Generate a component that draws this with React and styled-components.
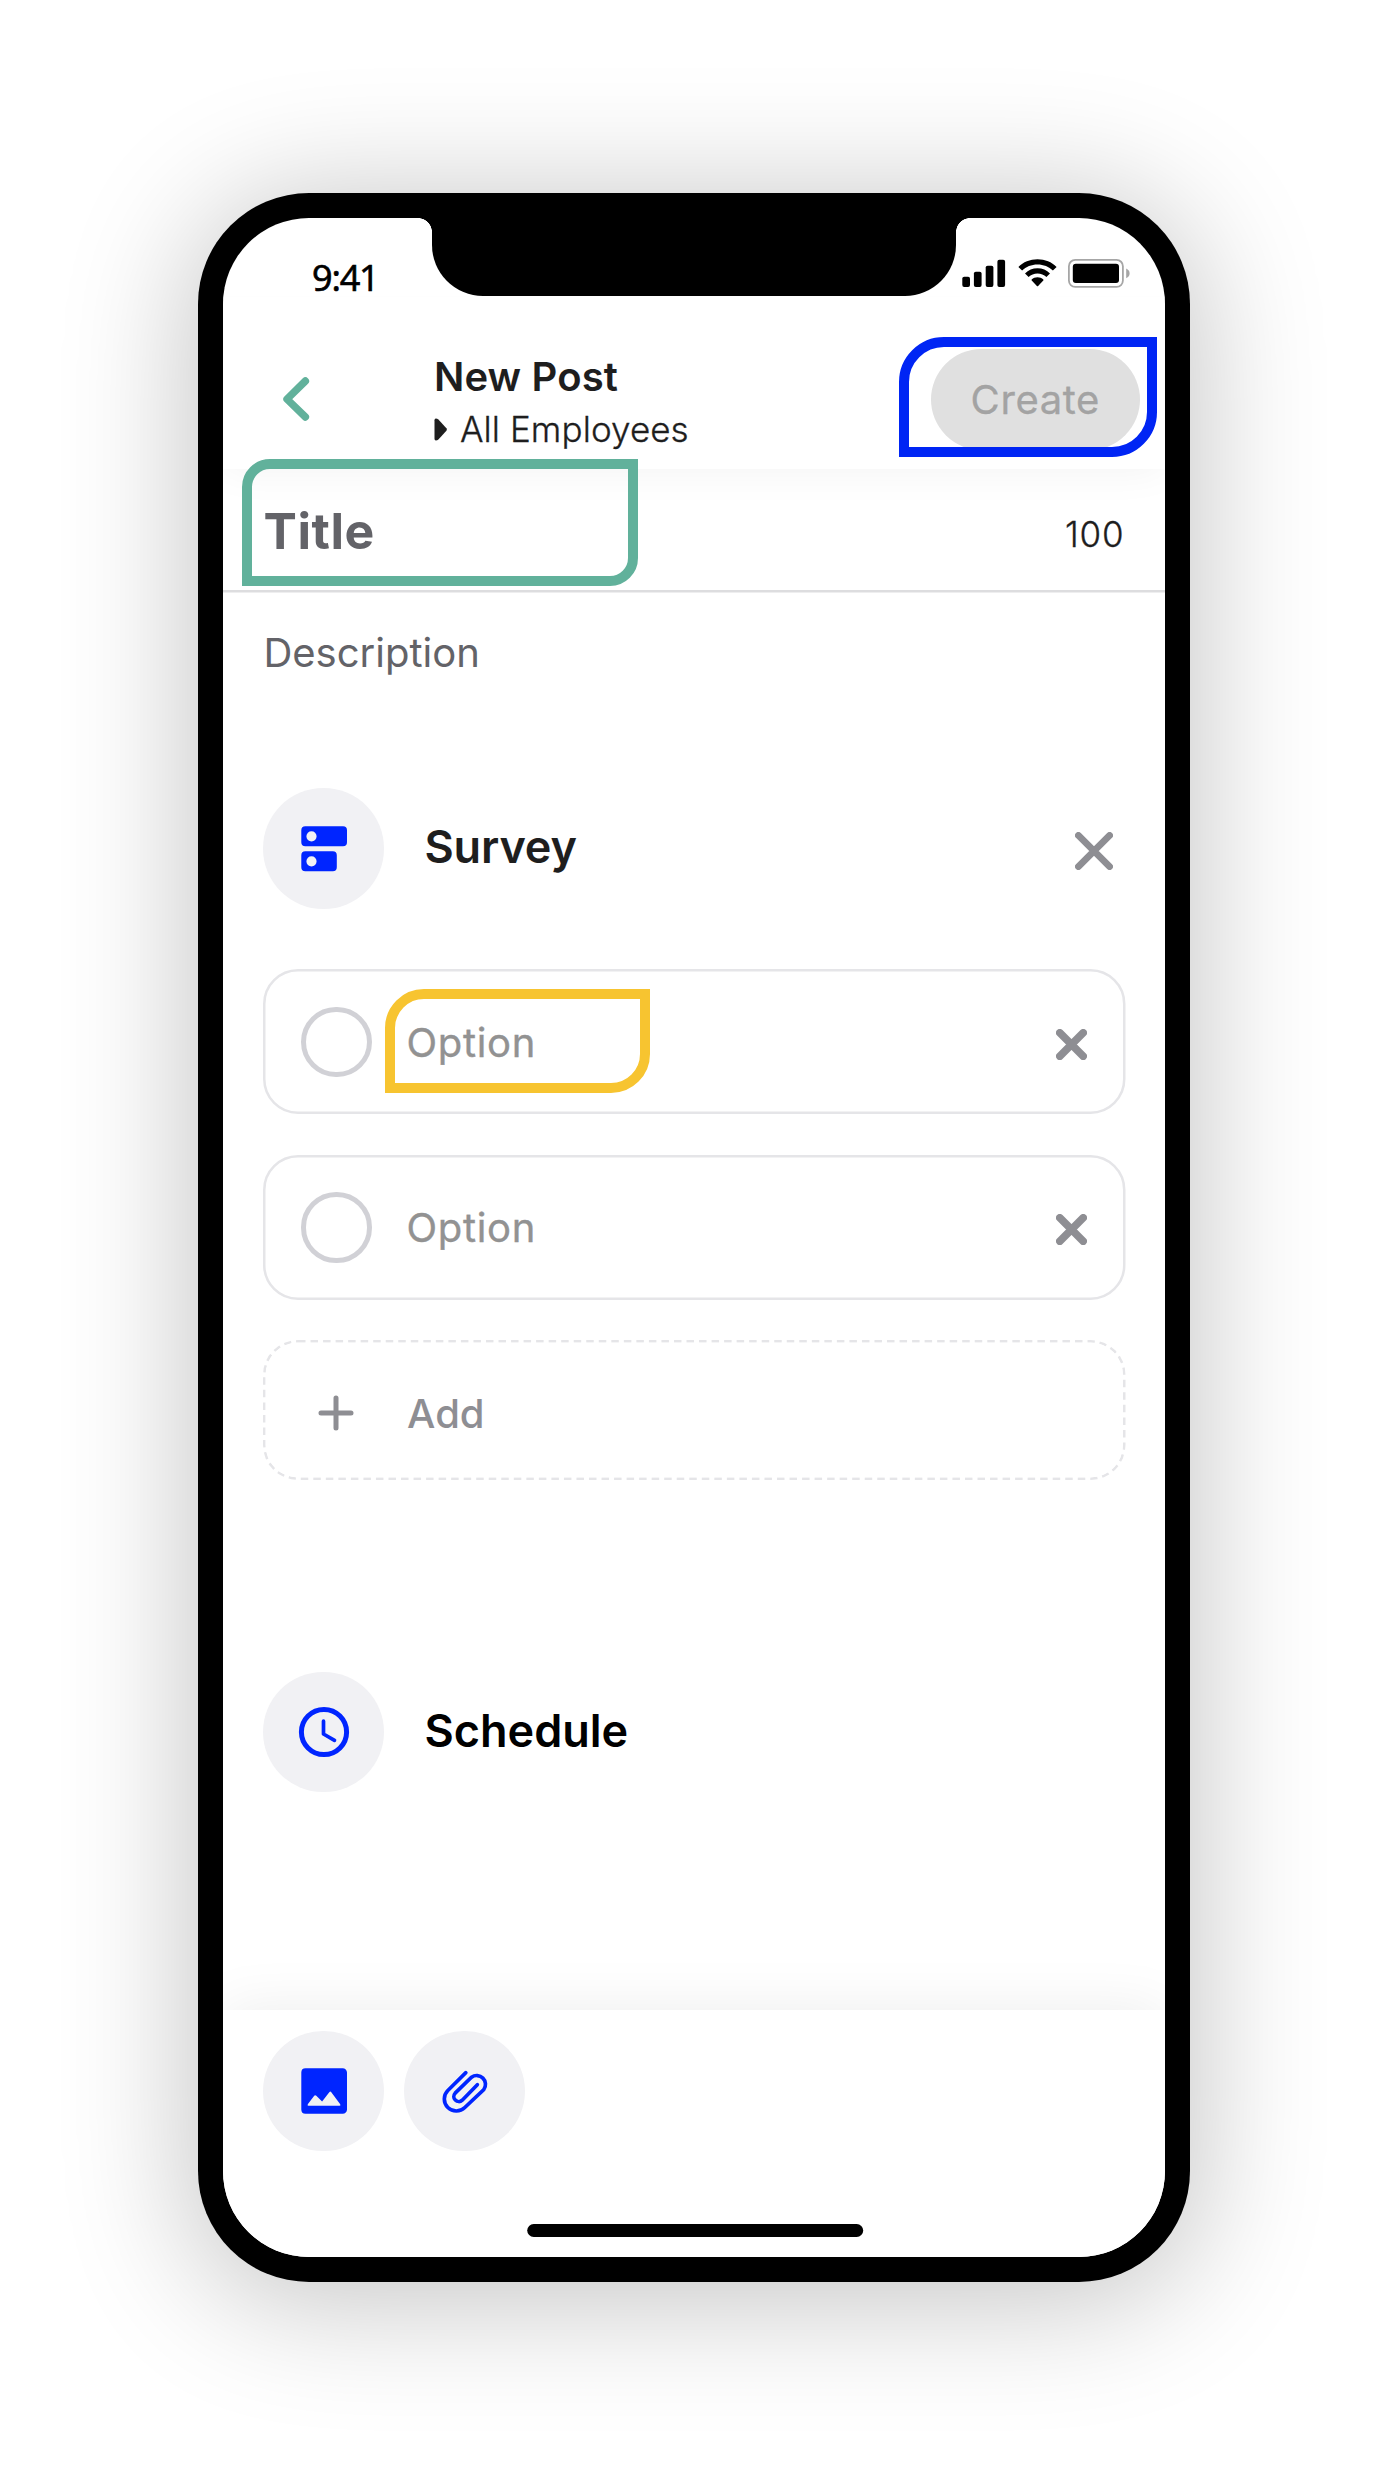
import React from "react";
import styled, { createGlobalStyle, css } from "styled-components";

const GlobalStyle = createGlobalStyle`
  *, *::before, *::after { box-sizing: border-box; }
  html, body { margin: 0; padding: 0; background: #fff; }
  button { font: inherit; border: 0; padding: 0; margin: 0; background: none; }
  svg { display: block; flex: none; }
`;

const Page = styled.main`
  height: 2475px;
  overflow: hidden;
  display: flex;
  justify-content: center;
  align-items: flex-start;
  padding-top: 193.3px;
  font-family: Inter, "Liberation Sans", sans-serif;
  color: #1e1e1e;
`;

const Device = styled.div`
  width: 991.4px;
  height: 2088.4px;
  padding: 25.1px;
  border-radius: 111px;
  background: #000;
  box-shadow: 0 12px 128px 9px rgba(0, 0, 0, 0.23);
`;

const Screen = styled.div`
  position: relative;
  height: 100%;
  display: flex;
  flex-direction: column;
  overflow: hidden;
  border-radius: 86px;
  background: #fff;
`;

const StatusBar = styled.div`
  position: relative;
  z-index: 3;
  height: 78px;
  display: grid;
  grid-template-columns: 208.2px 524.6px 1fr;
  grid-template-rows: 78px;
`;

const Clock = styled.time`
  padding: 35px 0 0 88.7px;
  font: 500 36px/49px "Open Sans", "Noto Sans", sans-serif;
  letter-spacing: -1.2px;
  color: #000;
  -webkit-text-stroke: 0.7px #000;
`;

const Notch = styled.div`
  position: relative;
  background: #000;
  border-radius: 0 0 51px 51px;

  &::before, &::after {
    content: "";
    position: absolute;
    top: 0;
    width: 14px;
    height: 14px;
  }
  &::before {
    right: 100%;
    background: radial-gradient(circle at 0 100%, transparent 13.6px, #000 14.2px);
  }
  &::after {
    left: 100%;
    background: radial-gradient(circle at 100% 100%, transparent 13.6px, #000 14.2px);
  }
`;

const StatusIcons = styled.div`
  display: flex;
  align-items: flex-start;
  gap: 11.9px;
  padding: 40.7px 0 0 5.5px;
`;

const Header = styled.header`
  position: relative;
  z-index: 2;
  height: 173px;
  padding: 32.4px 24.8px 0 57px;
  display: flex;
  align-items: center;
  background: #fff;
  box-shadow: 0 0 40px rgba(0, 0, 0, 0.055);
  clip-path: inset(0 0 -60px 0);
`;

const Heading = styled.div`
  flex: 1;
  padding: 8px 0 0 114px;
`;

const Title = styled.h1`
  margin: 0;
  font-size: 40px;
  font-weight: 600;
  line-height: 52px;
  letter-spacing: 0.15px;
  padding-left: 7.5px;
`;

const Audience = styled.div`
  display: flex;
  align-items: center;
  gap: 12.2px;
  padding-left: 7.3px;
  font-size: 35px;
  font-weight: 300;
  line-height: 52px;
  letter-spacing: 0.08px;
  -webkit-text-stroke: 0.3px currentColor;
`;

const CreateButton = styled.button`
  width: 209px;
  height: 101px;
  padding-top: 1px;
  border-radius: 50.5px;
  background: #e0e0e0;
  color: #a3a3a3;
  font-size: 40px;
  font-weight: 400;
  line-height: 48px;
  letter-spacing: 0.6px;
  -webkit-text-stroke: 0.3px currentColor;
`;

const hairline = css`
  content: "";
  position: absolute;
  top: 0;
  left: 0;
  width: 40%;
  height: 40%;
  transform: scale(2.5);
  transform-origin: 0 0;
  pointer-events: none;
`;

const TitleRow = styled.div`
  position: relative;
  height: 123.2px;
  display: flex;
  align-items: center;
  justify-content: space-between;
  padding: 3px 40px 2.5px 40.2px;

  &::after {
    ${hairline}
    top: 1px;
    width: 40.3%;
    border-bottom: 1px solid #dddddf;
  }
`;

const TitleField = styled.div`
  font-size: 50px;
  font-weight: 700;
  line-height: 60px;
  letter-spacing: 0.5px;
  color: #636368;
`;

const Remaining = styled.div`
  padding-top: 6px;
  font-size: 35px;
  font-weight: 300;
  line-height: 42px;
  letter-spacing: 0.9px;
  -webkit-text-stroke: 0.3px currentColor;
`;

const Description = styled.p`
  margin: 0;
  padding: 36.3px 40px 0;
  font-size: 40px;
  font-weight: 400;
  line-height: 48px;
  color: #636368;
`;

const Body = styled.section`
  flex: 1;
  padding: 111.4px 39.6px 0 40.1px;
`;

const SectionRow = styled.div`
  display: flex;
  align-items: center;
  height: 120.5px;
  gap: 40.5px;
  margin-top: ${(p) => p.$offset || 0}px;
  padding-right: ${(p) => p.$inset || 0}px;
`;

const IconCircle = styled.div`
  flex: none;
  width: 120.5px;
  height: 120.5px;
  border-radius: 50%;
  display: flex;
  align-items: center;
  justify-content: center;
  background: #f1f1f4;
`;

const SectionTitle = styled.h2`
  flex: 1;
  margin: 0;
  padding-bottom: 2.4px;
  font-size: 45px;
  font-weight: 600;
  line-height: 54px;
  letter-spacing: ${(p) => p.$tracking || 0}px;
  color: ${(p) => p.$color || "#1e1e1e"};
`;

const OptionList = styled.div`
  display: grid;
  gap: 40.2px;
  margin-top: 60.4px;
`;

const OptionRow = styled.div`
  position: relative;
  height: ${(p) => (p.$dashed ? 140.7 : 145.4)}px;
  display: flex;
  align-items: center;
  padding: ${(p) => (p.$dashed ? 5 : 0)}px 38px 0 37.5px;

  &::after {
    ${hairline}
    border: 1px ${(p) => (p.$dashed ? "dashed" : "solid")} #e5e5e8;
    border-radius: 14px;
  }
`;

const Radio = styled.span`
  width: 70.6px;
  height: 70.6px;
  border: 5px solid #d1d1d6;
  border-radius: 50%;
`;

const PlusSlot = styled.span`
  width: 70.6px;
  display: flex;
  justify-content: center;
`;

const OptionLabel = styled.span`
  flex: 1;
  padding: ${(p) => (p.$muted ? "1px 0 0 35.5px" : "2px 0 0 34.9px")};
  font-size: 40px;
  font-weight: ${(p) => (p.$muted ? 500 : 400)};
  line-height: 48px;
  letter-spacing: ${(p) => (p.$muted ? 0 : 0.7)}px;
  color: ${(p) => (p.$muted ? "#8e8e93" : "#929292")};
  -webkit-text-stroke: ${(p) => (p.$muted ? 0 : 0.35)}px currentColor;
`;

const Footer = styled.footer`
  position: relative;
  height: 246.2px;
  padding: 20.2px 40.1px 0;
  background: #fff;
  box-shadow: 0 0 56px rgba(0, 0, 0, 0.075);
`;

const Attachments = styled.div`
  display: flex;
  gap: 20.2px;
`;

const HomeIndicator = styled.div`
  width: 336.6px;
  height: 12.6px;
  margin: 73px auto 0;
  border-radius: 7px;
  background: #000;
  transform: translateX(1.2px);
`;

const Callout = styled.div`
  position: absolute;
  z-index: 4;
  left: ${(p) => p.$x}px;
  top: ${(p) => p.$y}px;
  width: ${(p) => p.$w}px;
  height: ${(p) => p.$h}px;
  border: 10px solid ${(p) => p.$color};
  border-radius: ${(p) => p.$r}px 0;
  pointer-events: none;
`;

const SignalIcon = () => (
  <svg width="44" height="29" viewBox="0 0 44 29">
    <rect x="0.3" y="17.7" width="7.7" height="10.3" rx="1.9" />
    <rect x="11.9" y="12.7" width="7.7" height="15.3" rx="1.9" />
    <rect x="23.7" y="6.7" width="7.7" height="21.3" rx="1.9" />
    <rect x="35.4" y="0.8" width="7.7" height="27.2" rx="1.9" />
  </svg>
);

const WifiIcon = () => (
  <svg width="39" height="28" viewBox="0 0 39 28">
    <path d="M19.5 0.2C27 0.2 33.8 3 38.6 7.9L34.9 11.6C30.9 7.8 25.6 5.5 19.5 5.5S8.1 7.8 4.1 11.6L0.4 7.9C5.2 3 12 0.2 19.5 0.2Z" />
    <path d="M19.5 9.3C24.3 9.3 28.7 11.2 32 14.4L28.4 17.9C26 15.7 22.9 14.4 19.5 14.4S13 15.7 10.6 17.9L7 14.4C10.3 11.2 14.7 9.3 19.5 9.3Z" />
    <path d="M19.5 18.3C21.7 18.3 23.8 19.1 25.3 20.6Q25.8 21.1 25.3 21.6L20.1 27Q19.5 27.6 18.9 27L13.7 21.6Q13.2 21.1 13.7 20.6C15.2 19.1 17.3 18.3 19.5 18.3Z" />
  </svg>
);

const BatteryIcon = () => (
  <svg width="62" height="29" viewBox="0 0 62 29">
    <rect x="0.9" y="0.9" width="54" height="27" rx="6.3" fill="none" stroke="#a6a6a6" strokeWidth="1.8" />
    <rect x="4.8" y="4.8" width="46.2" height="19.2" rx="3" />
    <path d="M58.2 9.6Q61.6 11.3 61.6 14.4T58.2 19.2Z" fill="#a6a6a6" />
  </svg>
);

const BackIcon = () => (
  <svg width="32" height="50" viewBox="0 0 32 50">
    <path d="M25.4 7L7 25.2L25.4 43" fill="none" stroke="#61b19b" strokeWidth="7.4" strokeLinecap="round" strokeLinejoin="round" />
  </svg>
);

const CaretIcon = () => (
  <svg width="14" height="23" viewBox="0 0 14 23">
    <path d="M0.5 2.2Q0.5 0.6 1.8 0.6Q3.3 0.6 4.4 1.6L12.4 10.3Q13.4 11.5 12.4 12.7L4.4 21.4Q3.3 22.4 1.8 22.4Q0.5 22.4 0.5 20.8Z" fill="#1e1e1e" />
  </svg>
);

const SurveyIcon = () => (
  <svg width="46" height="46" viewBox="0 0 46 46" fill="#0025ff">
    <path fillRule="evenodd" d="M4.3 0.3H42A4 4 0 0 1 46 4.3V16.3A4 4 0 0 1 42 20.3H4.3A4 4 0 0 1 0.3 16.3V4.3A4 4 0 0 1 4.3 0.3ZM10.5 5.2A5.1 5.1 0 1 0 10.5 15.4A5.1 5.1 0 1 0 10.5 5.2Z" />
    <path fillRule="evenodd" d="M4.3 25.3H31.8A4 4 0 0 1 35.8 29.3V41.3A4 4 0 0 1 31.8 45.3H4.3A4 4 0 0 1 0.3 41.3V29.3A4 4 0 0 1 4.3 25.3ZM10.5 30.2A5.1 5.1 0 1 0 10.5 40.4A5.1 5.1 0 1 0 10.5 30.2Z" />
  </svg>
);

const ScheduleIcon = () => (
  <svg width="52" height="52" viewBox="0 0 52 52" fill="none" stroke="#0025ff">
    <circle cx="26" cy="26" r="22.6" strokeWidth="5" />
    <path d="M25.5 15.2V28L36.5 34.4" strokeWidth="3.7" strokeLinecap="round" strokeLinejoin="round" />
  </svg>
);

const ImageIcon = () => (
  <svg width="46" height="46" viewBox="0 0 46 46">
    <path
      fill="#0025ff"
      fillRule="evenodd"
      d="M4.5 0.3H41.7A4.3 4.3 0 0 1 46 4.6V41.4A4.3 4.3 0 0 1 41.7 45.7H4.5A4.3 4.3 0 0 1 0.3 41.4V4.6A4.3 4.3 0 0 1 4.5 0.3ZM6.8 36.3Q6 37.8 7.6 37.8H38.4Q40 37.8 39.2 36.3L30.3 24.2Q29.3 23 28.3 24.2L21.1 33.6L15.3 27.8Q14.2 26.7 13.2 27.8Z"
    />
  </svg>
);

const ClipIcon = () => (
  <svg width="48" height="48" viewBox="-2.5 0 144 144">
    <path
      d="M75 17L21 70.5A36 36 0 0 0 72 121.5L129 67.4A26.4 26.4 0 0 0 92.1 30.6L43 78.4A15 15 0 0 0 64.2 99.6L109.5 53"
      fill="none"
      stroke="#0025ff"
      strokeWidth="11"
      strokeLinecap="round"
    />
  </svg>
);

const CloseIcon = ({ size, weight }) => (
  <svg width={size} height={size} viewBox={`0 0 ${size} ${size}`}>
    <path
      d={`M${weight / 2} ${weight / 2}L${size - weight / 2} ${size - weight / 2}M${size - weight / 2} ${weight / 2}L${weight / 2} ${size - weight / 2}`}
      stroke="#8e8e93"
      strokeWidth={weight}
      strokeLinecap="round"
    />
  </svg>
);

const PlusIcon = () => (
  <svg width="36" height="36" viewBox="0 0 36 36">
    <path d="M18 3V33M3 18H33" stroke="#8e8e93" strokeWidth="5" strokeLinecap="round" />
  </svg>
);

const CloseSlot = styled.span`
  padding-top: ${(p) => p.$drop}px;
`;

export default function App() {
  return (
    <>
      <GlobalStyle />
      <Page>
        <Device>
          <Screen>
            <StatusBar>
              <Clock>9:41</Clock>
              <Notch />
              <StatusIcons>
                <SignalIcon />
                <WifiIcon />
                <BatteryIcon />
              </StatusIcons>
            </StatusBar>

            <Header>
              <BackIcon />
              <Heading>
                <Title>New Post</Title>
                <Audience>
                  <CaretIcon />
                  All Employees
                </Audience>
              </Heading>
              <CreateButton>Create</CreateButton>
            </Header>

            <TitleRow>
              <TitleField>Title</TitleField>
              <Remaining>100</Remaining>
            </TitleRow>
            <Description>Description</Description>

            <Body>
              <SectionRow $inset={12}>
                <IconCircle><SurveyIcon /></IconCircle>
                <SectionTitle $tracking={-0.15}>Survey</SectionTitle>
                <CloseSlot $drop={5}><CloseIcon size={38} weight={6.8} /></CloseSlot>
              </SectionRow>

              <OptionList>
                {[0, 1].map((i) => (
                  <OptionRow key={i}>
                    <Radio />
                    <OptionLabel>Option</OptionLabel>
                    <CloseSlot $drop={4.6}><CloseIcon size={31} weight={7.6} /></CloseSlot>
                  </OptionRow>
                ))}
                <OptionRow $dashed>
                  <PlusSlot><PlusIcon /></PlusSlot>
                  <OptionLabel $muted>Add</OptionLabel>
                </OptionRow>
              </OptionList>

              <SectionRow $offset={190.5}>
                <IconCircle><ScheduleIcon /></IconCircle>
                <SectionTitle $color="#000">Schedule</SectionTitle>
              </SectionRow>
            </Body>

            <Footer>
              <Attachments>
                <IconCircle><ImageIcon /></IconCircle>
                <IconCircle><ClipIcon /></IconCircle>
              </Attachments>
              <HomeIndicator />
            </Footer>

            <Callout $x={18.6} $y={240.6} $w={396} $h={127} $r={28} $color="#61b19b" />
            <Callout $x={675.6} $y={118.6} $w={258} $h={120} $r={45} $color="#0025f4" />
            <Callout $x={161.6} $y={770.6} $w={265} $h={104} $r={39} $color="#f7c430" />
          </Screen>
        </Device>
      </Page>
    </>
  );
}
